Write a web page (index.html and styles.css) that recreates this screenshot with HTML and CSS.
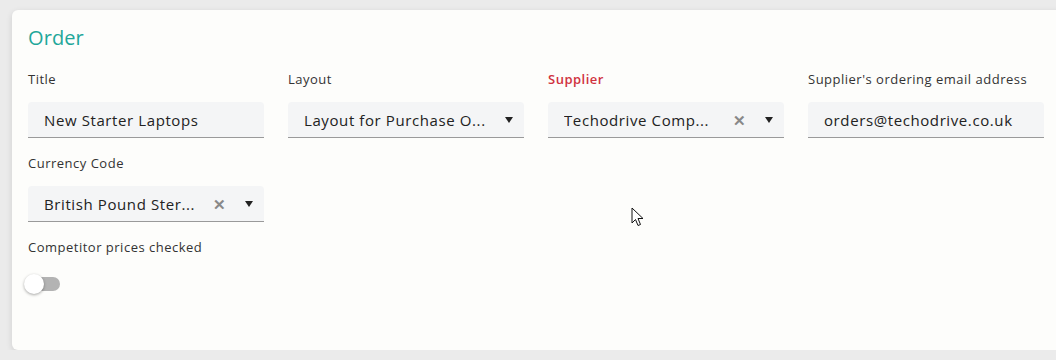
FILE: index.html
```
<!DOCTYPE html>
<html>
<head>
  <title>Order</title>
  <link rel="stylesheet" href="styles.css">
</head>
<body>
  <div class="card">
    <h2 class="card-title">Order</h2>
    <div class="fields">
      <div class="field">
        <label>Title</label>
        <div class="input">New Starter Laptops</div>
      </div>
      <div class="field">
        <label>Layout</label>
        <div class="input select">
          <span class="value">Layout for Purchase O...</span>
          <span class="caret"></span>
        </div>
      </div>
      <div class="field">
        <label class="required">Supplier</label>
        <div class="input select">
          <span class="value">Techodrive Comp...</span>
          <span class="clear">&#x2715;</span>
          <span class="caret"></span>
        </div>
      </div>
      <div class="field">
        <label>Supplier's ordering email address</label>
        <div class="input">orders@techodrive.co.uk</div>
      </div>
      <div class="field">
        <label>Currency Code</label>
        <div class="input select">
          <span class="value">British Pound Ster...</span>
          <span class="clear">&#x2715;</span>
          <span class="caret"></span>
        </div>
      </div>
    </div>
    <div class="field">
      <label>Competitor prices checked</label>
      <div class="toggle"><span class="knob"></span></div>
    </div>
  </div>

  <svg class="cursor" width="14" height="22" viewBox="0 0 14 22">
    <path d="M1 1 L1 16 L4.5 12.5 L7 18.5 L9.5 17.5 L7 11.5 L12 11.5 Z" fill="#fff" stroke="#111" stroke-width="1"/>
  </svg>
</body>
</html>
```

FILE: styles.css
```
body {
  margin: 0;
  background: #ebebeb;
  font-family: "Open Sans", Lato, sans-serif;
  color: #333;
}

.card {
  margin: 10px -20px 0 12px;
  height: 340px;
  box-sizing: border-box;
  padding: 14px 16px 12px 16px;
  background: #fdfdfb;
  border-radius: 6px;
  box-shadow: 0 2px 6px rgba(0, 0, 0, 0.12);
}

.card-title {
  margin: 0 0 17px 0;
  font-size: 20px;
  line-height: 28px;
  font-weight: 400;
  letter-spacing: 0.1px;
  color: #1fa79a;
}

.fields {
  display: grid;
  grid-template-columns: repeat(4, 236px);
  column-gap: 24px;
}

.field {
  margin-bottom: 15px;
}

.field label {
  display: block;
  font-size: 13px;
  line-height: 20px;
  letter-spacing: 0.5px;
  margin-bottom: 13px;
  color: #333;
}

.field label.required {
  color: #d0323e;
  font-weight: 600;
}

.input {
  height: 36px;
  box-sizing: border-box;
  padding: 0 16px;
  background: #f4f5f6;
  border-bottom: 1px solid #9a9a9a;
  border-radius: 4px 4px 0 0;
  display: flex;
  align-items: center;
  font-size: 15px;
  letter-spacing: 0.6px;
  color: #222;
}

.select .value {
  flex: 1;
  white-space: nowrap;
  overflow: hidden;
}

.clear {
  color: #888;
  font-size: 15px;
  font-weight: 600;
  margin-right: 18px;
}

.caret {
  width: 0;
  height: 0;
  border-left: 4px solid transparent;
  border-right: 4px solid transparent;
  border-top: 6px solid #222;
  margin-right: -5px;
}

.toggle {
  position: relative;
  width: 32px;
  height: 14px;
  margin: 20px 0 0 0;
  background: #b3b3b3;
  border-radius: 7px;
}

.knob {
  position: absolute;
  left: -4px;
  top: -3px;
  width: 20px;
  height: 20px;
  border-radius: 50%;
  background: #fff;
  box-shadow: 0 1px 3px rgba(0, 0, 0, 0.35);
}

.cursor {
  position: absolute;
  left: 631px;
  top: 207px;
}
```
